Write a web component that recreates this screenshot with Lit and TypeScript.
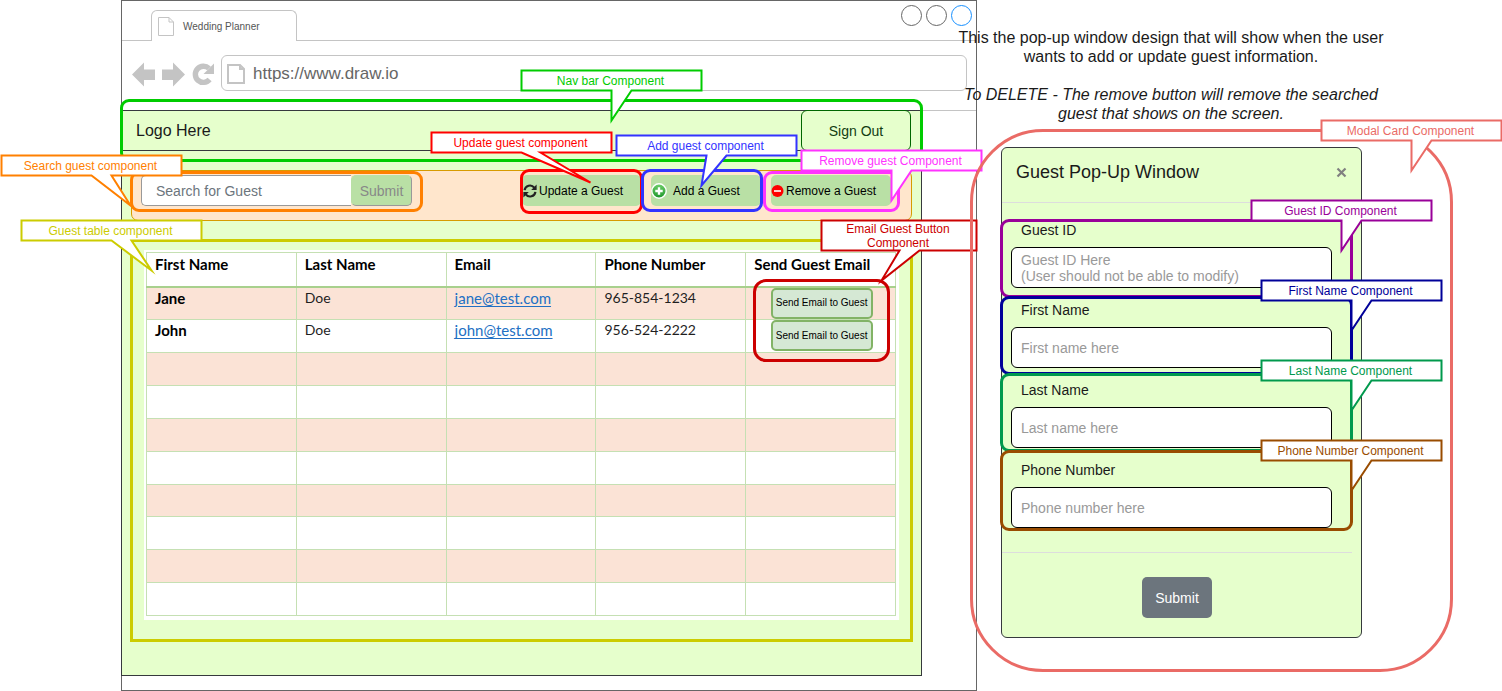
import { LitElement, html, css, svg, nothing } from "lit";
import { customElement, property } from "lit/decorators.js";

/* A speech bubble: a labelled box whose lower edge opens into a pointed tail. */
@customElement("call-out")
class CallOut extends LitElement {
  @property({ type: Number }) w = 180;
  @property({ type: Number }) h = 20;
  @property({ type: Number }) base = 90;
  @property({ type: Number }) baseEnd = 110;
  @property({ type: Number }) tipX = 90;
  @property({ type: Number }) tipY = 50;

  static styles = css`
    :host {
      position: absolute;
      z-index: 2;
      display: block;
      pointer-events: none;
      font: 12px/14px "Liberation Sans", Arial, sans-serif;
      text-align: center;
      white-space: nowrap;
    }
    .shape {
      display: block;
      overflow: visible;
    }
    .bubble {
      fill: #fff;
      stroke: currentColor;
      stroke-width: 2;
      stroke-miterlimit: 10;
    }
    .text {
      position: absolute;
      inset: 0 2px 0 0;
      display: grid;
      place-content: center;
    }
  `;

  render() {
    const { w, h, base, baseEnd, tipX, tipY } = this;
    const d = `M0 0H${w}V${h}H${baseEnd}L${tipX} ${tipY}L${base} ${h}H0Z`;
    return html`
      <svg class="shape" width=${w + 1} height=${h + 1} aria-hidden="true">
        <path class="bubble" transform="translate(.5 .5)" d=${d}></path>
      </svg>
      <span class="text"><slot></slot></span>
    `;
  }
}

const pageIcon = (w: number, h: number, stroke: number) => html`
  <svg class="page-icon" width=${w} height=${h} viewBox="0 0 ${w} ${h}" aria-hidden="true">
    <path
      d="M${stroke / 2} ${stroke / 2}H${w - 5}L${w - stroke / 2} 5V${h - stroke / 2}H${stroke / 2}Z M${w - 5} ${stroke / 2}V5H${w - stroke / 2}"
      fill="#fff" stroke="#c4c4c4" stroke-width=${stroke}></path>
  </svg>
`;

const refreshHalf = svg`
  <path d="M1.6 6.2A5.4 5.4 0 0 1 11.2 3.6" fill="none" stroke="#222" stroke-width="2.2"></path>
  <path d="M13.6 .6V6H8.2Z" fill="#222"></path>
`;

interface Guest {
  first: string;
  last: string;
  email: string;
  phone: string;
}

interface Field {
  id: string;
  label: string;
  hint: string;
  note: string;
  tone: string;
}

const GUESTS: Guest[] = [
  { first: "Jane", last: "Doe", email: "jane@test.com", phone: "965-854-1234" },
  { first: "John", last: "Doe", email: "john@test.com", phone: "956-524-2222" },
];

const COLUMNS = ["First Name", "Last Name", "Email", "Phone Number", "Send Guest Email"];

const FIELDS: Field[] = [
  { id: "guest-id", label: "Guest ID", hint: "Guest ID Here\n(User should not be able to modify)", note: "Guest ID Component", tone: "purple" },
  { id: "first-name", label: "First Name", hint: "First name here", note: "First Name Component", tone: "navy" },
  { id: "last-name", label: "Last Name", hint: "Last name here", note: "Last Name Component", tone: "green" },
  { id: "phone", label: "Phone Number", hint: "Phone number here", note: "Phone Number Component", tone: "brown" },
];

@customElement("app-root")
class AppRoot extends LitElement {
  static styles = css`
    :host {
      display: block;
      font: 14px/16px "Liberation Sans", Arial, sans-serif;
      color: #1a1a1a;
      background: #fff;
    }
    *, *::before, *::after { box-sizing: border-box; }
    button, input, textarea {
      font: inherit;
      color: inherit;
      margin: 0;
      padding: 0;
      border: 0;
      background: none;
      outline: none;
    }
    svg { flex: none; display: block; }

    .canvas {
      display: grid;
      grid-template-columns: minmax(0, 856fr) minmax(0, 525fr);
      align-items: start;
      padding-left: 121px;
    }

    /* outline drawn round an annotated part */
    .mark {
      position: absolute;
      z-index: 1;
      border: 3px solid currentColor;
      border-radius: 9px;
      pointer-events: none;
    }

    /* browser frame */
    .browser {
      border: 1px solid #666;
      padding-bottom: 14px;
    }
    .tabs {
      display: flex;
      align-items: flex-end;
      height: 40px;
      padding: 0 4px 0 29px;
      border-bottom: 1px solid #c4c4c4;
    }
    .tab {
      display: flex;
      align-items: center;
      gap: 9px;
      width: 146px;
      height: 31px;
      margin-bottom: -1px;
      padding-left: 6px;
      border: 1px solid #c4c4c4;
      border-bottom: 0;
      border-radius: 6px 6px 0 0;
      background: #fff;
      color: #555;
      font-size: 10px;
    }
    .tab-title { padding-top: 2px; }
    .controls {
      display: flex;
      gap: 4px;
      align-self: flex-start;
      margin: 4px 0 0 auto;
    }
    .control {
      width: 21px;
      height: 21px;
      border: 1px solid #666;
      border-radius: 50%;
    }
    .control.active { border-color: #1790ff; }
    .toolbar {
      display: flex;
      align-items: center;
      gap: 7px;
      padding: 14px 9px 19px 10px;
      border-bottom: 1px solid #c4c4c4;
    }
    .address {
      flex: 1;
      display: flex;
      align-items: center;
      gap: 8px;
      height: 36px;
      padding: 2px 0 0 5px;
      border: 1px solid #c4c4c4;
      border-radius: 6px;
      color: #666;
      font-size: 17px;
    }
    .address-input { flex: 1; min-width: 0; height: 100%; }

    /* application page */
    .page {
      margin: -1px 54px 0 -1px;
      padding-bottom: 33px;
      border: 1px solid #36393d;
      background: #e6ffcc;
    }
    .nav {
      position: relative;
      display: flex;
      align-items: center;
      justify-content: space-between;
      height: 40px;
      padding: 0 10px 0 14px;
      border-bottom: 1px solid #36393d;
    }
    .logo { font-size: 16px; }
    .sign-out {
      width: 110px;
      height: 41px;
      margin: -1px 0;
      border: 1px solid #006600;
      border-radius: 6px;
      color: #123d12;
    }
    .nav-mark { inset: -12px -2px; color: #00cc00; }
    .nav-note { left: 399px; top: -41px; color: #00cc00; }

    .strip {
      display: flex;
      gap: 10px;
      height: 51px;
      margin: 19px 9px 0;
      padding: 4px 20px 0 9px;
      border: 1px solid #d79b00;
      border-radius: 7px;
      background: #ffe6cc;
    }
    .search {
      position: relative;
      display: flex;
      flex: 0 1 271px;
      height: 31px;
      margin-right: auto;
    }
    .search-input {
      flex: 1;
      min-width: 0;
      padding-left: 14px;
      border: 1px solid #999;
      border-right: 0;
      border-radius: 5px 0 0 5px;
      background: #fff;
    }
    .search-input::placeholder { color: #6c757d; opacity: 1; }
    .search-submit {
      width: 61px;
      border: 1px solid #b9e0a5;
      border-right-color: #999;
      border-bottom-color: #999;
      border-radius: 5px;
      background: #b9e0a5;
      color: #888;
    }
    .search-mark { inset: -4px -11px -6px; color: #ff8000; }
    .search-note { left: -140px; top: -20px; color: #ff8000; }

    .tool { position: relative; height: 31px; }
    .tool-button {
      display: flex;
      align-items: center;
      gap: 2px;
      height: 31px;
      border-radius: 5px;
      background: #b9e0a5;
      color: #000;
      font-size: 12px;
      white-space: nowrap;
    }
    .update { width: 119px; padding-left: 1px; }
    .add { width: 110px; gap: 6px; }
    .remove { width: 120px; }
    .update-mark { inset: -6px -2px -8px; color: #ff0000; }
    .update-note { left: -91px; top: -43px; color: #ff0000; }
    .add-mark { inset: -6px -2px -6px -10px; color: #3333ff; }
    .add-note { left: -35px; top: -40px; color: #3333ff; }
    .remove-mark { inset: -4px -9px -6px -8px; color: #ff33ff; }
    .remove-note { left: 30px; top: -25px; color: #ff33ff; }

    /* guest table */
    .guests {
      position: relative;
      margin: 18px 8px 0;
      padding: 8px 11px 19px;
      border: 3px solid #cccc00;
    }
    .sheet { padding: 2px 3px 4px 2px; background: #fff; }
    .table {
      width: 100%;
      height: 364px;
      table-layout: fixed;
      border-collapse: collapse;
      color: #1f1f1f;
      font: 14px/16px Lato, "Liberation Sans", sans-serif;
    }
    .cell {
      height: 32px;
      padding: 2px 8px 0;
      border: 1px solid #c5e0b3;
      text-align: left;
      vertical-align: top;
      font-weight: 400;
    }
    .cell.strong { font-size: 15px; font-weight: 700; color: #000; }
    .cell.head {
      height: 34px;
      padding-top: 3px;
      border-bottom: 2px solid #a8d08d;
    }
    .cell.action { padding: 0 0 0 2px; }
    .row:nth-child(odd) { background: #fbe3d6; }
    .mail { color: #2270c4; font-size: 15px; text-underline-offset: 2px; }
    .send {
      display: block;
      width: 102px;
      height: 31px;
      margin: 0 auto;
      border: 2px solid #82b366;
      border-radius: 5px;
      background: #d5e8d4;
      color: #000;
      font: 10px/12px "Liberation Sans", Arial, sans-serif;
      white-space: nowrap;
    }
    .table-note { left: -112px; top: -22px; color: #cccc00; }
    .email-mark { top: 37px; right: 20px; width: 137px; height: 83px; border-radius: 13px; color: #cc0000; }
    .email-note { right: -67px; top: -22px; color: #cc0000; }

    /* pop-up column */
    .intro {
      position: relative;
      width: 440px;
      margin: 28px 0 24px -26px;
      font-size: 16px;
      line-height: 19px;
      text-align: center;
    }
    .intro-text { margin: 0 0 19px; }
    .intro-text.slanted { margin: 0; font-style: italic; }
    .modal {
      position: relative;
      width: 361px;
      margin-left: 24px;
      padding: 0 9px 19px 0;
      border: 1px solid #36393d;
      border-radius: 6px;
      background: #e6ffcc;
    }
    .modal-head {
      display: flex;
      align-items: center;
      justify-content: space-between;
      height: 55px;
      padding: 0 5px 6px 14px;
      border-bottom: 1px solid #dddddd;
    }
    .modal-title { margin: 0; font-size: 18px; line-height: 20px; font-weight: 400; }
    .fields {
      display: grid;
      gap: 14px;
      padding: 19px 20px 24px 9px;
    }
    .field {
      position: relative;
      display: grid;
      gap: 9px;
    }
    .field-label { padding-left: 10px; }
    .field-input {
      display: block;
      width: 100%;
      height: 41px;
      padding: 0 9px;
      border: 1px solid #000;
      border-radius: 6px;
      background: #fff;
      resize: none;
      overflow: hidden;
    }
    .field-input.multi { padding-top: 4px; }
    .field-input::placeholder { color: #999; opacity: 1; }
    .field-note { right: -110px; top: -22px; }
    .field-note.purple { right: -100px; }
    .purple { color: #990099; }
    .navy { color: #000099; }
    .green { color: #00994d; }
    .brown { color: #994c00; }
    .mark.purple { inset: -3px -21px -10px -11px; }
    .mark.navy { inset: -6px -21px -7px -11px; }
    .mark.green { inset: -9px -21px -4px -11px; }
    .mark.brown { inset: -12px -21px -3px -11px; }
    .modal-foot {
      display: flex;
      justify-content: center;
      padding-top: 24px;
      border-top: 1px solid #dddddd;
    }
    .modal-submit {
      width: 70px;
      height: 41px;
      border-radius: 5px;
      background: #6c757d;
      color: #fff;
    }
    .modal-mark {
      inset: -19px -92px -35px -32px;
      z-index: 3;
      border-radius: 73px;
      color: #ea6b66;
    }
    .modal-note { right: -141px; top: -28px; z-index: 4; color: #ea6b66; }
  `;

  private renderFrame() {
    return html`
      <div class="tabs">
        <div class="tab">${pageIcon(16, 19, 1)}<span class="tab-title">Wedding Planner</span></div>
        <div class="controls">
          <button class="control" aria-label="Minimise"></button>
          <button class="control" aria-label="Maximise"></button>
          <button class="control active" aria-label="Close"></button>
        </div>
      </div>
      <div class="toolbar">
        <button aria-label="Back">
          <svg width="23" height="27" viewBox="0 -2 23 27"><path d="M0 12.5L12 .5V7.5H23V18H12V24.5Z" fill="#c4c4c4"></path></svg>
        </button>
        <button aria-label="Forward">
          <svg width="23" height="27" viewBox="0 -2 23 27"><path d="M23 12.5L11 .5V7.5H0V18H11V24.5Z" fill="#c4c4c4"></path></svg>
        </button>
        <button aria-label="Reload">
          <svg width="22" height="26" viewBox="0 -2 22 26">
            <path d="M17.6 17.6A8.1 8.1 0 1 1 17 6.4" fill="none" stroke="#c4c4c4" stroke-width="5.4"></path>
            <path d="M22 1.5V12H11.5Z" fill="#c4c4c4"></path>
          </svg>
        </button>
        <label class="address">
          ${pageIcon(18, 20, 2)}
          <input class="address-input" aria-label="Address" value="https://www.draw.io" />
        </label>
      </div>
    `;
  }

  private renderNav() {
    return html`
      <nav class="nav">
        <span class="logo">Logo Here</span>
        <button class="sign-out">Sign Out</button>
        <div class="mark nav-mark"></div>
        <call-out class="nav-note">Nav bar Component</call-out>
      </nav>
    `;
  }

  private renderStrip() {
    return html`
      <div class="strip">
        <form class="search">
          <input class="search-input" aria-label="Search for Guest" placeholder="Search for Guest" />
          <button class="search-submit" type="button">Submit</button>
          <div class="mark search-mark"></div>
          <call-out class="search-note" .tipX=${129} .tipY=${50}>Search guest component</call-out>
        </form>
        <div class="tool">
          <button class="tool-button update">
            <svg width="14" height="14" viewBox="0 0 14 14" aria-hidden="true">
              ${refreshHalf}
              <g transform="rotate(180 7 7)">${refreshHalf}</g>
            </svg>
            Update a Guest
          </button>
          <div class="mark update-mark"></div>
          <call-out class="update-note" .baseEnd=${109} .tipX=${159} .tipY=${50}>Update guest component</call-out>
        </div>
        <div class="tool">
          <button class="tool-button add">
            <svg width="16" height="16" viewBox="0 0 16 16" aria-hidden="true">
              <defs>
                <linearGradient id="leaf" x1="0" y1="0" x2="0" y2="1">
                  <stop offset="0" stop-color="#6fcf6a"></stop>
                  <stop offset="1" stop-color="#1d962a"></stop>
                </linearGradient>
              </defs>
              <circle cx="8" cy="8" r="7.2" fill="url(#leaf)" stroke="#fff" stroke-width="1.4"></circle>
              <path d="M8 4.3V11.7M4.3 8H11.7" stroke="#fff" stroke-width="2.4"></path>
            </svg>
            Add a Guest
          </button>
          <div class="mark add-mark"></div>
          <call-out class="add-note" .tipX=${85} .tipY=${50}>Add guest component</call-out>
        </div>
        <div class="tool">
          <button class="tool-button remove">
            <svg width="13" height="13" viewBox="0 0 13 13" aria-hidden="true">
              <circle cx="6.5" cy="7" r="6" fill="#f00"></circle>
              <path d="M3 7H10" stroke="#fff" stroke-width="1.6"></path>
            </svg>
            Remove a Guest
          </button>
          <div class="mark remove-mark"></div>
          <call-out class="remove-note">Remove guest Component</call-out>
        </div>
      </div>
    `;
  }

  private renderRow(guest?: Guest) {
    return html`
      <tr class="row">
        <th class="cell strong" scope="row">${guest?.first ?? nothing}</th>
        <td class="cell">${guest?.last ?? nothing}</td>
        <td class="cell">${guest ? html`<a class="mail" href="mailto:${guest.email}">${guest.email}</a>` : nothing}</td>
        <td class="cell">${guest?.phone ?? nothing}</td>
        <td class="cell action">${guest ? html`<button class="send">Send Email to Guest</button>` : nothing}</td>
      </tr>
    `;
  }

  private renderGuests() {
    const blanks = Array.from({ length: 8 });
    return html`
      <section class="guests">
        <div class="sheet">
          <table class="table">
            <thead>
              <tr>${COLUMNS.map((name) => html`<th class="cell strong head" scope="col">${name}</th>`)}</tr>
            </thead>
            <tbody>
              ${GUESTS.map((guest) => this.renderRow(guest))}
              ${blanks.map(() => this.renderRow())}
            </tbody>
          </table>
        </div>
        <div class="mark email-mark"></div>
        <call-out class="table-note" .tipX=${130} .tipY=${50}>Guest table component</call-out>
        <call-out class="email-note" .w=${155} .h=${30} .base=${78} .baseEnd=${98} .tipX=${60} .tipY=${60}>
          Email Guest Button<br />Component
        </call-out>
      </section>
    `;
  }

  private renderField(field: Field) {
    const multi = field.hint.includes("\n");
    return html`
      <div class="field">
        <label class="field-label" for=${field.id}>${field.label}</label>
        ${multi
          ? html`<textarea class="field-input multi" id=${field.id} readonly placeholder=${field.hint}></textarea>`
          : html`<input class="field-input" id=${field.id} placeholder=${field.hint} />`}
        <div class="mark ${field.tone}"></div>
        <call-out class="field-note ${field.tone}">${field.note}</call-out>
      </div>
    `;
  }

  private renderPopup() {
    return html`
      <div class="intro">
        <p class="intro-text">
          This the pop-up window design that will show when the user wants to add or update guest information.
        </p>
        <p class="intro-text slanted">
          To DELETE - The remove button will remove the searched guest that shows on the screen.
        </p>
      </div>
      <form class="modal">
        <header class="modal-head">
          <h2 class="modal-title">Guest Pop-Up Window</h2>
          <button type="button" aria-label="Close">
            <svg width="11" height="11" viewBox="0 0 11 11"><path d="M1.5 1.5L9.5 9.5M9.5 1.5L1.5 9.5" stroke="#808080" stroke-width="2.2"></path></svg>
          </button>
        </header>
        <div class="fields">${FIELDS.map((field) => this.renderField(field))}</div>
        <footer class="modal-foot">
          <button class="modal-submit" type="button">Submit</button>
        </footer>
        <div class="mark modal-mark"></div>
        <call-out class="modal-note">Modal Card Component</call-out>
      </form>
    `;
  }

  render() {
    return html`
      <main class="canvas">
        <div class="browser">
          ${this.renderFrame()}
          <div class="page">${this.renderNav()}${this.renderStrip()}${this.renderGuests()}</div>
        </div>
        <aside>${this.renderPopup()}</aside>
      </main>
    `;
  }
}
